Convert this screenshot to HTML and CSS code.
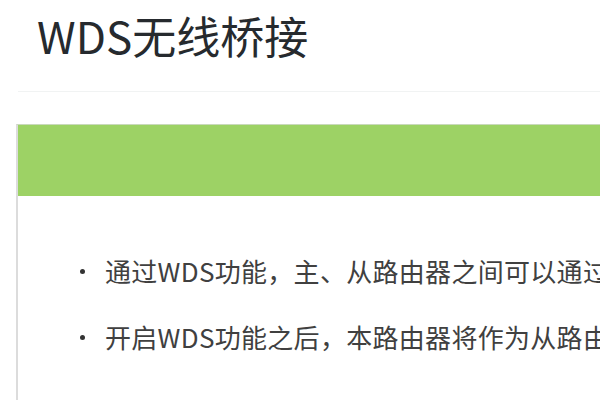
FILE: index.html
```html
<!DOCTYPE html>
<html lang="zh-CN">
<head>
    <meta charset="UTF-8">
    <title>WDS无线桥接</title>
    <link rel="stylesheet" href="styles.css">
</head>
<body>
<div class="page">
    <div class="header">
        <h1 class="title">WDS无线桥接</h1>
    </div>
    <div class="panel">
        <div class="panel-head"></div>
        <ul class="tips">
            <li>通过WDS功能，主、从路由器之间可以通过</li>
            <li>开启WDS功能之后，本路由器将作为从路由</li>
        </ul>
    </div>
</div>
</body>
</html>
```

FILE: styles.css
```css
html, body {
    height: 100%;
}

body {
    margin: 0;
    background-color: #fff;
    font-family: "Noto Sans CJK SC", "Noto Sans", sans-serif;
    overflow: hidden;
}

.page {
    height: 100%;
    padding-left: 16px;
    display: flex;
    flex-direction: column;
}

.header {
    height: 91px;
    margin-left: 2px;
    border-bottom: 1px solid #f1f3f3;
}

.title {
    margin: 0;
    padding: 6px 0 0 19px;
    font-size: 44px;
    font-weight: normal;
    line-height: 58px;
    color: #262a2e;
    white-space: nowrap;
}

.panel {
    flex: 1;
    margin-top: 32px;
    border-left: 2px solid #dcdcdc;
    border-top: 1px solid #c9d9bb;
    overflow: hidden;
}

.panel-head {
    height: 71px;
    background-color: #9dd265;
}

.tips {
    list-style: none;
    margin: 0;
    padding: 60px 0 0 87px;
}

.tips li {
    position: relative;
    font-size: 26px;
    line-height: 30px;
    letter-spacing: 0.3px;
    color: #404040;
    white-space: nowrap;
    margin-bottom: 36px;
}

.tips li::before {
    content: "";
    position: absolute;
    left: -25px;
    top: 13px;
    width: 5px;
    height: 5px;
    border-radius: 50%;
    background-color: #333;
}
```
